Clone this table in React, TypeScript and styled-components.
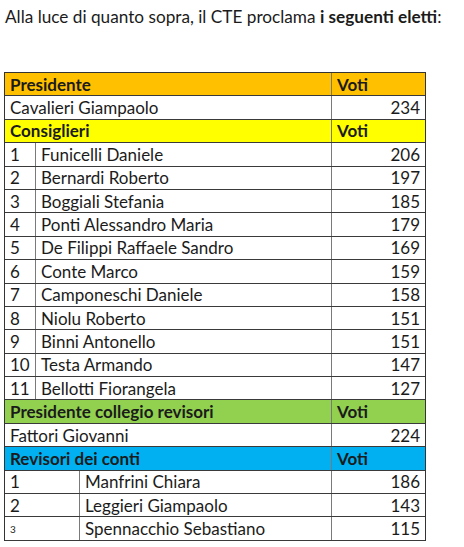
import React from 'react';
import styled, {createGlobalStyle} from 'styled-components';

// Election results sheet
const GlobalStyle = createGlobalStyle`
  html, body {
    margin: 0;
    padding: 0;
    background: #ffffff;
  }
  body {
    font-family: 'Lato', 'Liberation Sans', sans-serif;
    color: #1b1b1b;
  }
`;

type Section = {
    title: string;
    color: string;
    numbered?: 'narrow' | 'wide';
    rows: Array<[string, number]>;
};

const sections: Section[] = [
    {title: 'Presidente', color: '#ffc000', rows: [['Cavalieri Giampaolo', 234]]},
    {
        title: 'Consiglieri', color: '#ffff00', numbered: 'narrow', rows: [
            ['Funicelli Daniele', 206],
            ['Bernardi Roberto', 197],
            ['Boggiali Stefania', 185],
            ['Ponti Alessandro Maria', 179],
            ['De Filippi Raffaele Sandro', 169],
            ['Conte Marco', 159],
            ['Camponeschi Daniele', 158],
            ['Niolu Roberto', 151],
            ['Binni Antonello', 151],
            ['Testa Armando', 147],
            ['Bellotti Fiorangela', 127],
        ]
    },
    {title: 'Presidente collegio revisori', color: '#92d050', rows: [['Fattori Giovanni', 224]]},
    {
        title: 'Revisori dei conti', color: '#00b0f0', numbered: 'wide', rows: [
            ['Manfrini Chiara', 186],
            ['Leggieri Giampaolo', 143],
            ['Spennacchio Sebastiano', 115],
        ]
    },
];

const App = () => {
    return (
        <Page>
            <GlobalStyle />
            <Intro>
                Alla luce di quanto sopra, il CTE proclama <b>i seguenti eletti</b>:
            </Intro>
            <Sheet>
                {sections.map((section) => (
                    <React.Fragment key={section.title}>
                        <Row $cols="1fr 93px" $bg={section.color}>
                            <Cell $bold>{section.title}</Cell>
                            <Cell $bold $last>Voti</Cell>
                        </Row>
                        {section.rows.map(([name, votes], i) => (
                            <Row
                                key={name}
                                $cols={section.numbered === 'narrow' ? '31px 1fr 93px'
                                    : section.numbered === 'wide' ? '75px 1fr 93px' : '1fr 93px'}
                            >
                                {section.numbered && (
                                    <Cell $small={section.numbered === 'wide' && i === 2}>{i + 1}</Cell>
                                )}
                                <Cell>{name}</Cell>
                                <Cell $right $last>{votes}</Cell>
                            </Row>
                        ))}
                    </React.Fragment>
                ))}
            </Sheet>
        </Page>
    );
};

const Page = styled.div`
  padding: 0 0 0 4px;
`;

const Intro = styled.p`
  margin: 0;
  padding: 6px 0 0 1px;
  height: 72px;
  box-sizing: border-box;
  font-size: 17.2px;
  line-height: 22px;

  b {
    font-weight: 700;
  }
`;

const Sheet = styled.div`
  width: 422px;
  border: 1px solid #333;
  border-bottom: none;
  box-sizing: border-box;
`;

const Row = styled.div<{ $cols: string; $bg?: string }>`
  display: grid;
  grid-template-columns: ${p => p.$cols};
  height: 23.4px;
  box-sizing: border-box;
  border-bottom: 1px solid #3a3a3a;
  background: ${p => p.$bg || '#ffffff'};
`;

const Cell = styled.div<{ $bold?: boolean; $right?: boolean; $last?: boolean; $small?: boolean }>`
  display: flex;
  align-items: center;
  justify-content: ${p => p.$right ? 'flex-end' : 'flex-start'};
  padding: 0 5px;
  border-right: ${p => p.$last ? 'none' : '1px solid #7a7a7a'};
  font-size: ${p => p.$small ? '10px' : '17px'};
  font-weight: ${p => p.$bold ? 700 : 400};
  white-space: nowrap;
  overflow: hidden;
`;

export default App;
